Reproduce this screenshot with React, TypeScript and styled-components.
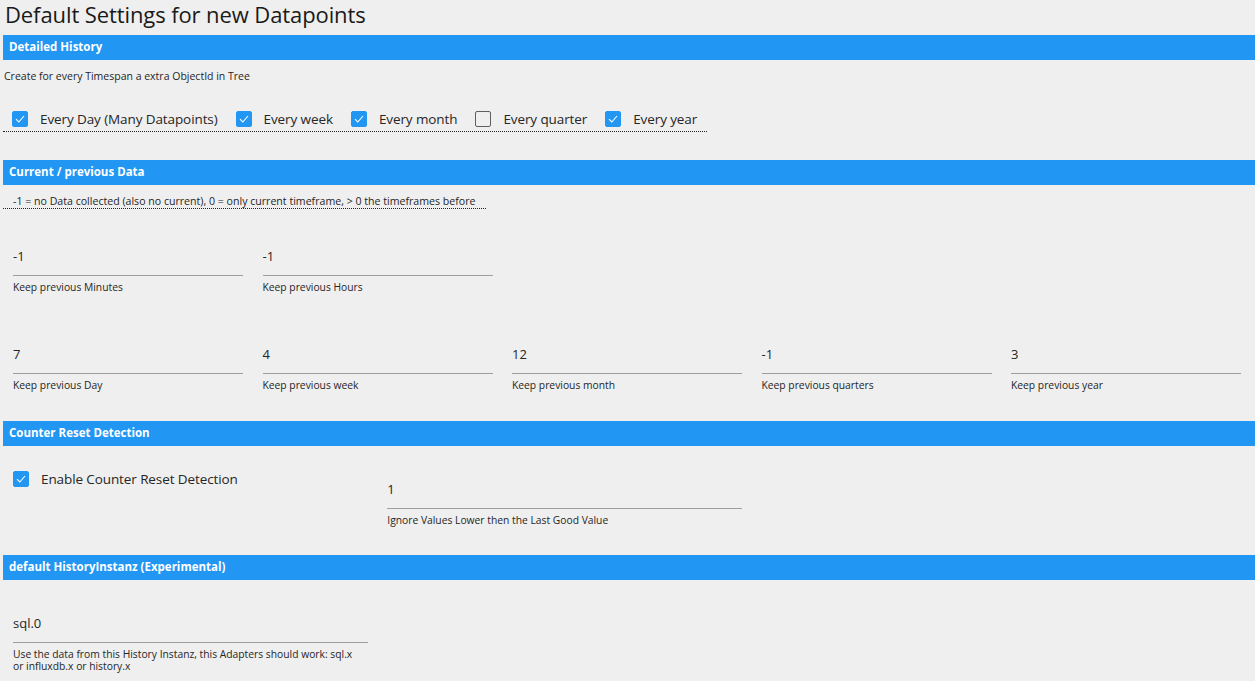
import styled, { createGlobalStyle } from "styled-components";

const GlobalStyle = createGlobalStyle`
  html, body {
    margin: 0;
    padding: 0;
    background: #efefef;
  }
  body {
    font-family: "Open Sans", "Noto Sans", sans-serif;
    color: #262626;
  }
`;

const detailOptions = [
  { label: "Every Day (Many Datapoints)", checked: true },
  { label: "Every week", checked: true },
  { label: "Every month", checked: true },
  { label: "Every quarter", checked: false },
  { label: "Every year", checked: true },
];

const shortTerm = [
  { value: "-1", label: "Keep previous Minutes" },
  { value: "-1", label: "Keep previous Hours" },
];

const longTerm = [
  { value: "7", label: "Keep previous Day" },
  { value: "4", label: "Keep previous week" },
  { value: "12", label: "Keep previous month" },
  { value: "-1", label: "Keep previous quarters" },
  { value: "3", label: "Keep previous year" },
];

const Check = ({ checked }: { checked: boolean }) => (
  <Box $checked={checked}>
    {checked && (
      <svg width="10" height="8" viewBox="0 0 10 8">
        <path d="M1 4.2 L3.8 7 L9 1" fill="none" stroke="#fff" strokeWidth="1.1" />
      </svg>
    )}
  </Box>
);

const Field = ({ value, label, span }: { value: string; label: string; span: number }) => (
  <FieldWrap $span={span}>
    <ValueLine>{value}</ValueLine>
    <FieldLabel>{label}</FieldLabel>
  </FieldWrap>
);

export default function App() {
  return (
    <>
      <GlobalStyle />
      <Page>
        <Title>Default Settings for new Datapoints</Title>

        <SectionBar>Detailed History</SectionBar>
        <SectionBody $top={10} $bottom={29}>
          <SmallText>Create for every Timespan a extra ObjectId in Tree</SmallText>
          <CheckRow>
            {detailOptions.map((o) => (
              <CheckItem key={o.label}>
                <Check checked={o.checked} />
                <CheckLabel>{o.label}</CheckLabel>
              </CheckItem>
            ))}
          </CheckRow>
        </SectionBody>

        <SectionBar>Current / previous Data</SectionBar>
        <SectionBody $top={9} $bottom={31}>
          <Note>-1 = no Data collected (also no current), 0 = only current timeframe, &gt; 0 the timeframes before</Note>
          <Grid $top={29}>
            {shortTerm.map((f) => (
              <Field key={f.label} {...f} span={2} />
            ))}
          </Grid>
          <Grid $top={43}>
            {longTerm.map((f) => (
              <Field key={f.label} {...f} span={2} />
            ))}
          </Grid>
        </SectionBody>

        <SectionBar>Counter Reset Detection</SectionBar>
        <SectionBody $top={25} $bottom={30}>
          <Grid $top={0}>
            <CheckCell>
              <CheckItem>
                <Check checked />
                <CheckLabel>Enable Counter Reset Detection</CheckLabel>
              </CheckItem>
            </CheckCell>
            <Field value="1" label="Ignore Values Lower then the Last Good Value" span={3} />
          </Grid>
        </SectionBody>

        <SectionBar>default HistoryInstanz (Experimental)</SectionBar>
        <SectionBody $top={25} $bottom={0}>
          <Grid $top={0}>
            <Field
              value="sql.0"
              label="Use the data from this History Instanz, this Adapters should work: sql.x or influxdb.x or history.x"
              span={3}
            />
          </Grid>
        </SectionBody>
      </Page>
    </>
  );
}

const Page = styled.div`
  padding-left: 3px;
  height: 681px;
  overflow: hidden;
`;

const Title = styled.h1`
  margin: 0 0 6px;
  padding-left: 2px;
  font-size: 22px;
  font-weight: 400;
  line-height: 29px;
  letter-spacing: -0.1px;
  color: #1a1a1a;
`;

const SectionBar = styled.div`
  height: 25px;
  line-height: 24px;
  background: #2196f3;
  color: #fff;
  font-size: 11.5px;
  font-weight: 700;
  padding-left: 6px;
`;

const SectionBody = styled.div<{ $top: number; $bottom: number }>`
  padding-top: ${({ $top }) => $top}px;
  padding-bottom: ${({ $bottom }) => $bottom - 1}px;
`;

const SmallText = styled.div`
  font-size: 10.5px;
  line-height: 12px;
  padding-left: 1px;
`;

const CheckRow = styled.div`
  display: flex;
  width: fit-content;
  align-items: center;
  gap: 18px;
  margin-top: 29px;
  padding: 0 10px 4px 9px;
  border-bottom: 1px dotted #222;
`;

const CheckItem = styled.div`
  display: flex;
  align-items: center;
  height: 16px;
`;

const Box = styled.span<{ $checked: boolean }>`
  box-sizing: border-box;
  width: 16px;
  height: 16px;
  border-radius: 2px;
  display: flex;
  align-items: center;
  justify-content: center;
  flex-shrink: 0;
  background: ${({ $checked }) => ($checked ? "#2196f3" : "transparent")};
  border: 1px solid ${({ $checked }) => ($checked ? "#2196f3" : "#5f5f5f")};
  margin-right: 12px;
`;

const CheckLabel = styled.span`
  font-size: 13.5px;
  letter-spacing: -0.1px;
  white-space: nowrap;
  color: #262626;
`;

const Note = styled.div`
  width: fit-content;
  padding: 0 11px 0 10px;
  font-size: 10.6px;
  line-height: 14px;
  border-bottom: 1px dotted #222;
`;

const Grid = styled.div<{ $top: number }>`
  display: grid;
  grid-template-columns: repeat(10, 1fr);
  margin-top: ${({ $top }) => $top}px;
  margin-right: 4.5px;
`;

const CheckCell = styled.div`
  grid-column: span 3;
  padding-left: 10px;
`;

const FieldWrap = styled.div<{ $span: number }>`
  grid-column: span ${({ $span }) => $span};
  padding: 0 9.5px 0 10px;
`;

const ValueLine = styled.div`
  height: 37px;
  line-height: 37px;
  font-size: 13px;
  border-bottom: 1px solid #9e9e9e;
  color: #262626;
`;

const FieldLabel = styled.div`
  margin-top: 5px;
  padding-right: 8px;
  font-size: 10.3px;
  line-height: 12px;
  color: #262626;
`;
